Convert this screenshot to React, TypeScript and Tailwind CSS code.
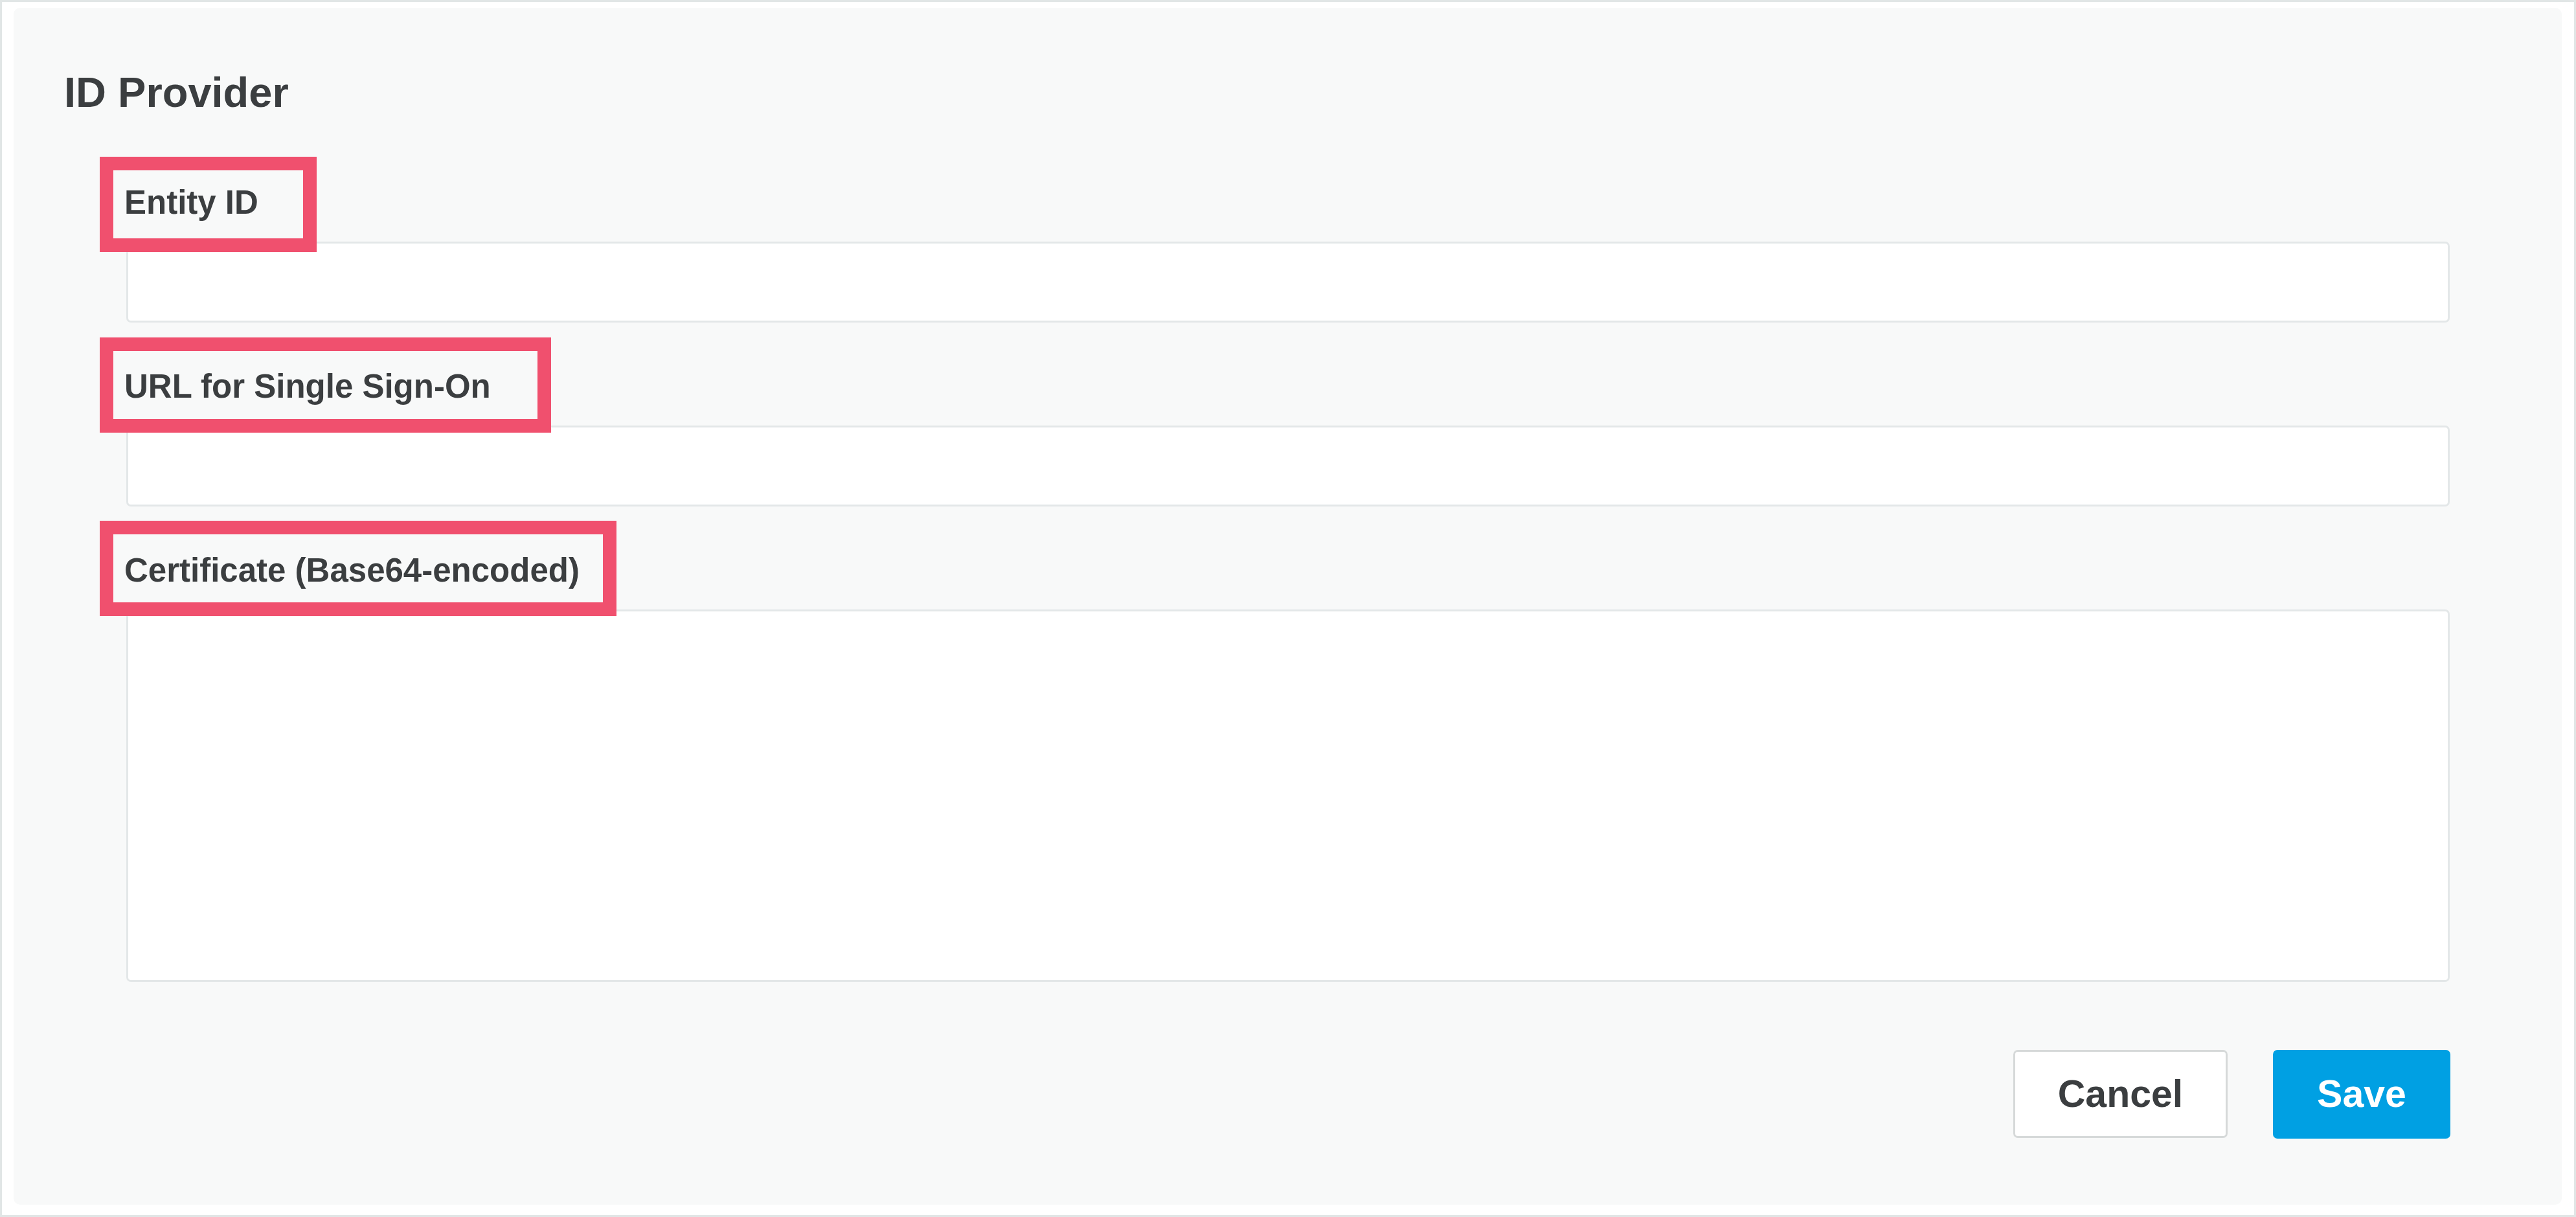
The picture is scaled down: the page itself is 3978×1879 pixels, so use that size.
import React from 'react'

type Field = {
  label: string
  boxWidth: number
  boxTop: number
  multiline?: boolean
}

const FIELDS: Field[] = [
  { label: 'Entity ID', boxWidth: 335, boxTop: -45 },
  { label: 'URL for Single Sign-On', boxWidth: 697, boxTop: -50 },
  { label: 'Certificate (Base64-encoded)', boxWidth: 798, boxTop: -51, multiline: true },
]

function FormField({ field }: { field: Field }) {
  return (
    <div className="flex flex-col">
      <div className="relative mb-[35px]">
        <label className="block -ml-[3px] text-[51px] leading-[51px] font-bold text-[#3b3e40]">
          {field.label}
        </label>
        {/* highlight box drawn over the label */}
        <div
          className="pointer-events-none absolute left-[-41px] z-10 h-[147px] border-[21px] border-[#f0506e]"
          style={{ top: field.boxTop, width: field.boxWidth }}
        />
      </div>
      {field.multiline ? (
        <textarea className="h-[575px] w-full resize-none rounded-[7px] border-[3px] border-[#e3e7e8] bg-white" />
      ) : (
        <input
          type="text"
          className="h-[125px] w-full rounded-[7px] border-[3px] border-[#e3e7e8] bg-white"
        />
      )}
    </div>
  )
}

export default function App() {
  return (
    <div
      className="flex h-[1879px] w-[3978px] border-[3px] border-[#e1e6e6] bg-white pt-[9px] pl-[18px] pr-[19px] pb-[16px]"
      style={{ fontFamily: '"Liberation Sans", Arial, sans-serif' }}
    >
      <div className="flex flex-1 flex-col rounded-[10px] bg-[#f8f9f9]">
        <h2 className="mt-[98px] ml-[78px] text-[65px] leading-[65px] font-bold text-[#3b3e40]">
          ID Provider
        </h2>

        <div className="mt-[112px] flex flex-col gap-[73px] pl-[174px] pr-[173px]">
          {FIELDS.map(f => (
            <FormField key={f.label} field={f} />
          ))}
        </div>

        <div className="mt-[105px] flex justify-end gap-[70px] pr-[172px]">
          <button className="h-[136px] w-[331px] rounded-[7px] border-[3px] border-[#d6d9d9] bg-white text-[59px] font-bold text-[#3b3e40]">
            Cancel
          </button>
          <button className="h-[137px] w-[274px] rounded-[7px] bg-[#00a0e3] text-[59px] font-bold text-white">
            Save
          </button>
        </div>
      </div>
    </div>
  )
}
